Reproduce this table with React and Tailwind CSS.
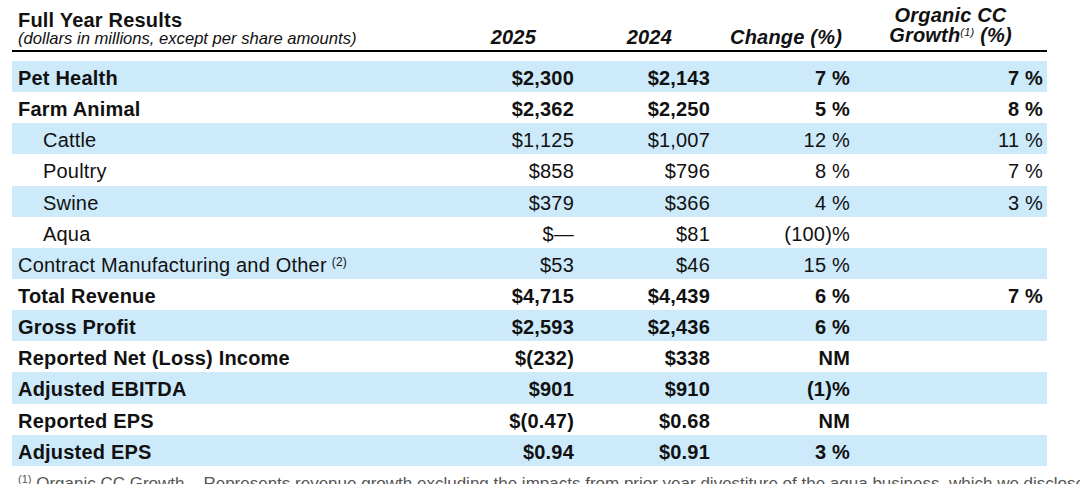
import React from "react";

const rows = [
  { label: "Pet Health", bold: true, band: true, v: ["$2,300", "$2,143", "7 %", "7 %"] },
  { label: "Farm Animal", bold: true, v: ["$2,362", "$2,250", "5 %", "8 %"] },
  { label: "Cattle", indent: true, band: true, v: ["$1,125", "$1,007", "12 %", "11 %"] },
  { label: "Poultry", indent: true, v: ["$858", "$796", "8 %", "7 %"] },
  { label: "Swine", indent: true, band: true, v: ["$379", "$366", "4 %", "3 %"] },
  { label: "Aqua", indent: true, v: ["$\u2014", "$81", "(100)%", ""] },
  { label: "Contract Manufacturing and Other", sup: "(2)", band: true, v: ["$53", "$46", "15 %", ""] },
  { label: "Total Revenue", bold: true, v: ["$4,715", "$4,439", "6 %", "7 %"] },
  { label: "Gross Profit", bold: true, band: true, v: ["$2,593", "$2,436", "6 %", ""] },
  { label: "Reported Net (Loss) Income", bold: true, v: ["$(232)", "$338", "NM", ""] },
  { label: "Adjusted EBITDA", bold: true, band: true, v: ["$901", "$910", "(1)%", ""] },
  { label: "Reported EPS", bold: true, v: ["$(0.47)", "$0.68", "NM", ""] },
  { label: "Adjusted EPS", bold: true, band: true, v: ["$0.94", "$0.91", "3 %", ""] },
];

const grid = "grid grid-cols-[462px_100px_136px_140px_193px_4px]";

export default function App() {
  return (
    <div
      className="h-[484px] w-[1080px] overflow-hidden bg-white text-[#111]"
      style={{ fontFamily: '"Liberation Sans", Arial, sans-serif' }}
    >
      <div className="ml-[12px] w-[1035px]">
        {/* header */}
        <div className={`${grid} h-[52px] border-b-2 border-black`}>
          <div className="flex flex-col pl-[6px] pt-[10px]">
            <div className="whitespace-nowrap text-[20px] leading-[20px] font-bold tracking-[0.2px]">Full Year Results</div>
            <div className="whitespace-nowrap text-[16.6px] leading-[18px] italic">(dollars in millions, except per share amounts)</div>
          </div>
          <div className="flex items-end justify-end pr-[38px] pb-[3px] text-[20px] leading-[20px] font-bold italic tracking-[0.2px]">2025</div>
          <div className="flex items-end justify-end pr-[38px] pb-[3px] text-[20px] leading-[20px] font-bold italic tracking-[0.2px]">2024</div>
          <div className="flex items-end justify-end whitespace-nowrap pr-[8px] pb-[3px] text-[20px] leading-[20px] font-bold italic tracking-[0.2px]">Change (%)</div>
          <div className="flex flex-col items-center justify-end whitespace-nowrap pl-[8px] pb-[2px] text-[20px] leading-[20px] font-bold italic tracking-[0.2px]">
            <span className="block">Organic CC</span>
            <span className="block">
              Growth<span className="relative top-[-6px] text-[11px] font-normal">(1)</span> (%)
            </span>
          </div>
          <div />
        </div>

        {/* rows */}
        <div className="mt-[9px]">
          {rows.map((r, i) => (
            <div
              key={i}
              className={`${grid} h-[31.15px] overflow-hidden whitespace-nowrap pt-[2px] text-[20px] leading-[31px] tracking-[0.2px] ${
                r.band ? "bg-[#cdeafb]" : ""
              } ${r.bold ? "font-bold" : "font-normal"}`}
            >
              <div className={r.indent ? "pl-[31px]" : "pl-[6px]"}>
                {r.label}
                {r.sup && (
                  <sup className="ml-[5px] text-[12px] font-normal">{r.sup}</sup>
                )}
              </div>
              <div className="text-right">{r.v[0]}</div>
              <div className="text-right">{r.v[1]}</div>
              <div className="text-right">{r.v[2]}</div>
              <div className="text-right">{r.v[3]}</div>
              <div />
            </div>
          ))}
        </div>

        {/* footnote */}
        <div className="mt-[9px] whitespace-nowrap pl-[6px] text-[17px] leading-[18px] text-[#555]">
          <sup className="text-[11px]">(1)</sup> Organic CC Growth – Represents revenue growth excluding the impacts from prior year divestiture of the aqua business, which we disclose
        </div>
      </div>
    </div>
  );
}
